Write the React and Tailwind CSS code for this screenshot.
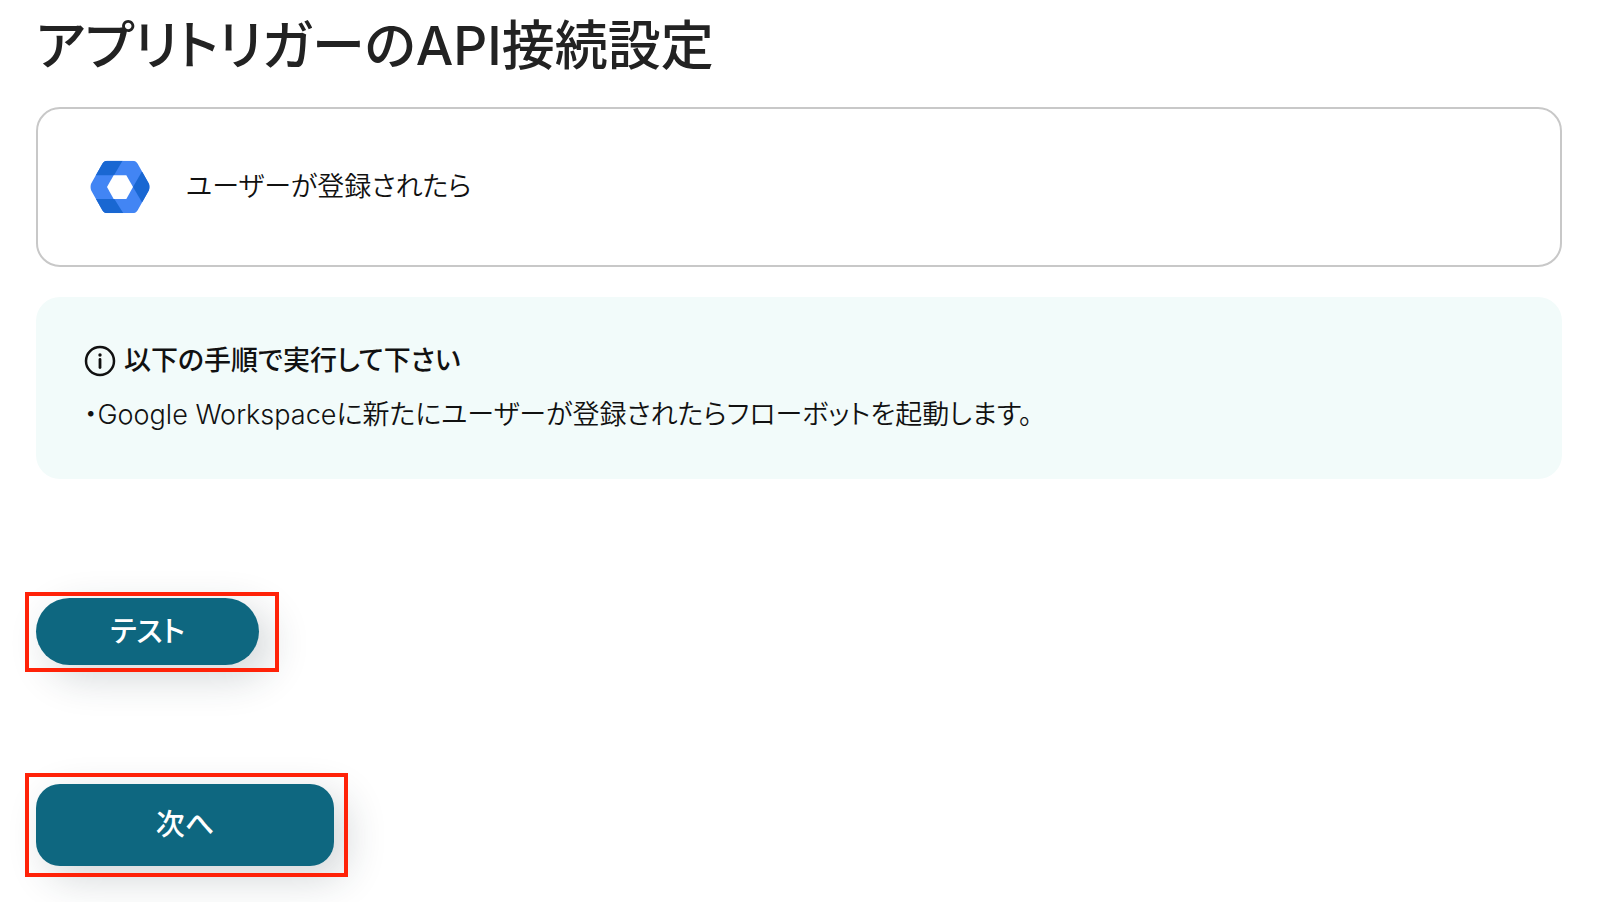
import { useState } from 'react';

const WorkspaceIcon = () => (
  <svg viewBox="0 0 180 160" className="w-[60px] shrink-0" aria-hidden="true">
    <clipPath id="hexagon">
      <path d="M52 2 H128 Q138 2 143 11 L176 70 Q182 81 176 92 L143 151 Q138 160 128 160 H52 Q42 160 37 151 L4 92 Q-2 81 4 70 L37 11 Q42 2 52 2 Z" />
    </clipPath>
    <g clipPath="url(#hexagon)">
      <rect width="180" height="160" fill="#4285f4" />
      <path d="M0 0 H99 L72 46 H0 Z" fill="#1967d2" />
      <path d="M0 117 H73 L100 160 H0 Z" fill="#1967d2" />
      <path d="M129 81 L155 36 L180 36 V127 H156 Z" fill="#1967d2" />
      <path d="M51 81 L71 46 H109 L129 81 L109 117 H71 Z" fill="#ffffff" />
    </g>
  </svg>
);

const InfoIcon = () => (
  <svg viewBox="0 0 32 32" className="w-8 shrink-0" fill="none" aria-hidden="true">
    <circle cx="16" cy="16" r="14" stroke="#111111" strokeWidth="2.5" />
    <path d="M16 14.5 V22.5" stroke="#111111" strokeWidth="2.8" strokeLinecap="round" />
    <circle cx="16" cy="10" r="1.7" fill="#111111" />
  </svg>
);

// Red frame drawn around the button to press
const Highlight = ({ className, children }) => (
  <div className="relative w-fit">
    {children}
    <span className={`absolute border-4 border-[#ff2208] pointer-events-none ${className}`} />
  </div>
);

const App = () => {
  const [tested, setTested] = useState(false);

  return (
    <main
      lang="ja"
      className="px-9 pt-2 pb-9 bg-white text-[#222222] font-[Inter,'Noto_Sans_CJK_JP',sans-serif] [font-feature-settings:'palt']"
    >
      <h1 className="text-[53px] leading-[76px] font-medium">アプリトリガーのAPI接続設定</h1>

      <section className="mt-[23px] mr-[2px] h-40 flex items-center gap-9 px-[52px] border-2 border-[#c8c8c8] rounded-3xl">
        <WorkspaceIcon />
        <p className="text-[27px] leading-10 font-[350] text-[#111111]">ユーザーが登録されたら</p>
      </section>

      <section className="mt-[30px] mr-[2px] px-12 pt-11 pb-11 bg-[#f2fbfa] rounded-3xl text-[27px] leading-10 text-[#111111]">
        <h2 className="flex items-center gap-2 font-medium">
          <InfoIcon />
          以下の手順で実行して下さい
        </h2>
        <p className="mt-[14px] font-[350]">・Google Workspaceに新たにユーザーが登録されたらフローボットを起動します。</p>
      </section>

      <div className="mt-[119px] flex flex-col gap-[119px] text-white">
        <Highlight className="-top-[6px] -bottom-[7px] -left-[11px] -right-5">
          <button
            type="button"
            onClick={() => setTested(true)}
            aria-pressed={tested}
            className="block w-[223px] h-[67px] rounded-full bg-[#0e6780] text-[29px] font-medium shadow-[12px_12px_40px_rgba(30,50,60,0.2)]"
          >
            テスト
          </button>
        </Highlight>

        <Highlight className="-top-[11px] -bottom-[11px] -left-[11px] -right-[14px]">
          <button
            type="button"
            className="block w-[298px] h-[82px] rounded-3xl bg-[#0e6780] text-[29px] font-medium shadow-[12px_12px_40px_rgba(30,50,60,0.2)]"
          >
            次へ
          </button>
        </Highlight>
      </div>
    </main>
  );
};

export default App;
